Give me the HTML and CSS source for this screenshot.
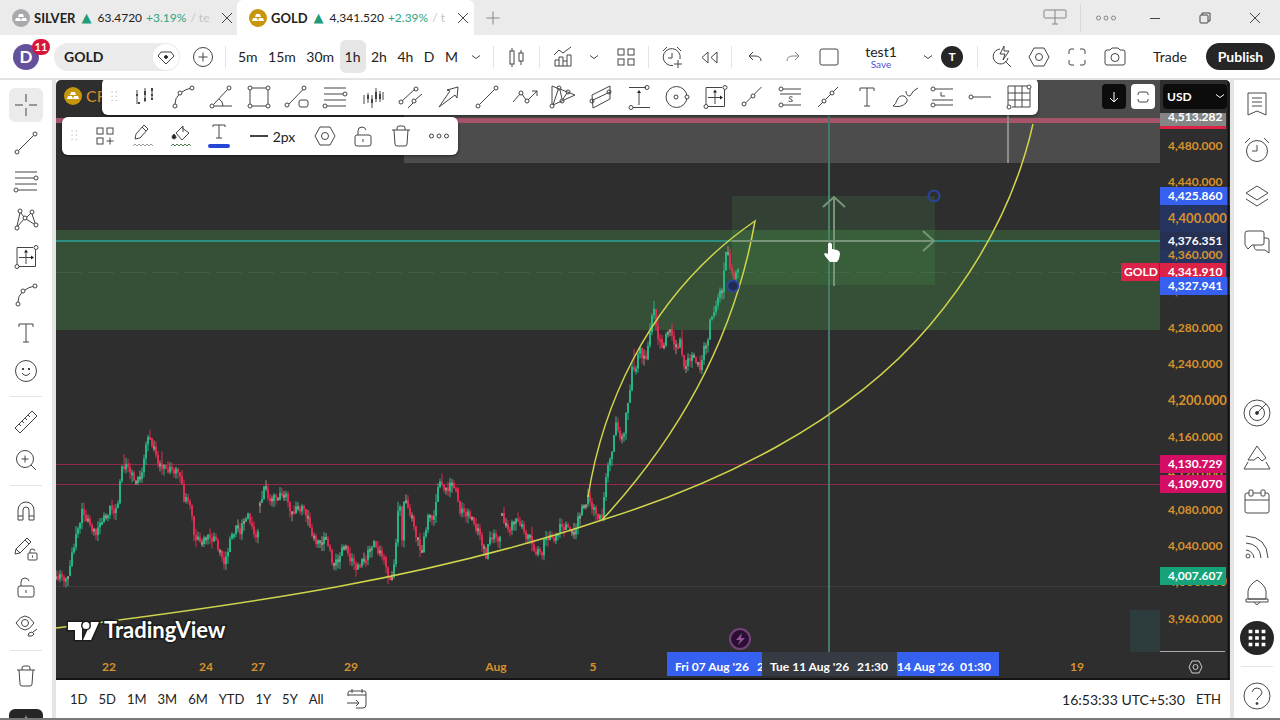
FILE: index.html
```html
<!DOCTYPE html>
<html lang="en">
<head>
  <meta charset="UTF-8" />
  <meta name="viewport" content="width=device-width, initial-scale=1.0"/>
  <title>GOLD 4,341.520 +2.39%</title>
  <link rel="stylesheet" href="styles.css">
</head>
<body>
  <svg class="defs" aria-hidden="true">
    <symbol id="chevron" viewBox="0 0 28 28"><path d="M10 12.500l4 3 4-3"/></symbol>
    <symbol id="trend" viewBox="0 0 28 28"><path d="M6.500 21.500l15-15"/><circle cx="5" cy="23" r="2"/><circle cx="23" cy="5" r="2"/></symbol>
    <symbol id="fib" viewBox="0 0 28 28"><path d="M3 5h22M3 11h19M3 17h22M6 23h19"/><circle cx="24" cy="11" r="2"/><circle cx="4" cy="23" r="2"/></symbol>
    <symbol id="curve" viewBox="0 0 28 28"><path d="M6 21q0-6 4-9.500M13 9q4-3 8-3.500"/><circle cx="6" cy="23" r="2"/><circle cx="11" cy="10" r="2"/><circle cx="23" cy="5" r="2"/></symbol>
    <symbol id="range" viewBox="0 0 28 28"><path d="M5 21V4.500h16M23.500 7v16.500H7M14 21V8M7 14.500h13"/><path class="arrowhead" d="M12 9.500l2-3 2 3zM19 12.500l3 2-3 2z"/><circle cx="24" cy="4.500" r="2"/><circle cx="5" cy="23.500" r="2"/></symbol>
    <symbol id="text" viewBox="0 0 28 28"><path d="M7 8V5h14v3M14 5v18M11 23h6"/></symbol>
    <symbol id="hex" viewBox="0 0 28 28"><path d="M9 5h10l5 9-5 9H9l-5-9z"/><circle cx="14" cy="14" r="3.500"/></symbol>
    <symbol id="unlock" viewBox="0 0 28 28"><rect x="6" y="13" width="16" height="11" rx="2"/><path d="M9 13V9q0-4 4-4 3 0 4 3M14 17v3"/></symbol>
    <symbol id="trash" viewBox="0 0 28 28"><path d="M5 8h18M10 8V6q0-2 2-2h4q2 0 2 2v2M7 8l1 14q0 2 2 2h8q2 0 2-2l1-14"/></symbol>
    <symbol id="dots" viewBox="0 0 28 28"><circle cx="6.500" cy="14" r="2"/><circle cx="14" cy="14" r="2"/><circle cx="21.500" cy="14" r="2"/></symbol>
    <symbol id="grip" viewBox="0 0 28 28"><path class="grip-dots" d="M11 8h1.500M16 8h1.500M11 13h1.500M16 13h1.500M11 18h1.500M16 18h1.500"/></symbol>
    <symbol id="close" viewBox="0 0 28 28"><path d="M9 9l10 10M19 9L9 19"/></symbol>
    <symbol id="bars" viewBox="0 0 28 28"><path d="M6 7v14M14 5v14M21 5v12"/><path class="thick" d="M5 12h2M7 20h2M14 8v4M14 15v3M21 5v3M21 11v2M21 15v2"/></symbol>
    <symbol id="bullion" viewBox="0 0 18 18"><circle cx="9" cy="9" r="9"/><path class="ingot" d="M7 5h4l1 3H6zM4 9h4l1 3H3zM10 9h4l1 3H9z"/></symbol>
  </svg>

  <div class="app">
    <header class="tabs">
      <div class="tab">
        <svg class="coin silver"><use href="#bullion"/></svg>
        <b>SILVER</b><span class="up">▲</span><span>63.4720</span><span class="gain">+3.19%</span><span class="fade">/ te</span>
        <button class="tab-close" aria-label="Close SILVER"><svg class="icon"><use href="#close"/></svg></button>
      </div>
      <div class="tab current">
        <svg class="coin"><use href="#bullion"/></svg>
        <b>GOLD</b><span class="up">▲</span><span>4,341.520</span><span class="gain">+2.39%</span><span class="fade">/ t</span>
        <button class="tab-close" aria-label="Close GOLD"><svg class="icon"><use href="#close"/></svg></button>
      </div>
      <button class="btn" aria-label="New tab"><svg class="icon light" viewBox="0 0 28 28"><path d="M14 7.500v13M7.500 14h13"/></svg></button>
      <div class="window-buttons">
        <button aria-label="Link window"><svg class="icon light" viewBox="0 0 28 28"><rect x="3" y="6" width="22" height="8" rx="1"/><path d="M14 6v14M11 20h6"/></svg></button>
        <button class="ruled" aria-label="Menu"><svg class="icon light"><use href="#dots"/></svg></button>
        <button aria-label="Minimise"><svg class="icon" viewBox="0 0 28 28"><path d="M9 14.500h10"/></svg></button>
        <button aria-label="Restore"><svg class="icon" viewBox="0 0 28 28"><rect x="9" y="11" width="8" height="8" rx="1"/><path d="M11 11V9h8v8h-2"/></svg></button>
        <button aria-label="Close"><svg class="icon"><use href="#close"/></svg></button>
      </div>
    </header>

    <nav class="toolbar">
      <button class="avatar" aria-label="Account">D<span class="badge">11</span></button>
      <button class="symbol">GOLD<span class="gem"><svg class="icon" viewBox="0 0 28 28"><path d="M9 9h10l3 4-8 8-8-8z"/><path class="solid" d="M14 12l2 2-2 2-2-2z"/></svg></span></button>
      <button class="btn" aria-label="Compare"><svg class="icon" viewBox="0 0 28 28"><circle cx="14" cy="14" r="9.500"/><path d="M14 9.500v9M9.500 14h9"/></svg></button>
      <i class="sep"></i>
      <div class="intervals">
        <button>5m</button><button>15m</button><button>30m</button><button class="active">1h</button><button>2h</button><button>4h</button><button>D</button><button>M</button>
      </div>
      <button class="more" aria-label="More intervals"><svg class="icon"><use href="#chevron"/></svg></button>
      <i class="sep"></i>
      <button class="btn" aria-label="Candles"><svg class="icon" viewBox="0 0 28 28"><rect x="7" y="8" width="4" height="13"/><rect x="16" y="10" width="4" height="8"/><path d="M9 5v3M9 21v3M18 7v3M18 18v4"/></svg></button>
      <i class="sep"></i>
      <button class="btn" aria-label="Indicators"><svg class="icon" viewBox="0 0 28 28"><path d="M5 12l5-5 4 3 8-6M6 23v-6h4v-3h4v4h4v-6h4v11zM10 17v6M14 18v5M18 18v5"/></svg></button>
      <button class="more" aria-label="Favourite indicators"><svg class="icon"><use href="#chevron"/></svg></button>
      <button class="btn" aria-label="Templates"><svg class="icon" viewBox="0 0 28 28"><rect x="6" y="6" width="6" height="6"/><rect x="16" y="6" width="6" height="6"/><rect x="6" y="16" width="6" height="6"/><rect x="16" y="16" width="6" height="6"/></svg></button>
      <i class="sep"></i>
      <button class="btn" aria-label="Alert"><svg class="icon" viewBox="0 0 28 28"><path d="M22 16a8.500 8.500 0 1 0-7 6.500M14 10v5h-4M5 8l4-4M19 4l4 4M20 17v8M16 21h8"/></svg></button>
      <button class="btn" aria-label="Replay"><svg class="icon" viewBox="0 0 28 28"><path d="M13 9v11l-6-5.500zM22 9v11l-6-5.500z"/></svg></button>
      <i class="sep"></i>
      <button class="btn" aria-label="Undo"><svg class="icon" viewBox="0 0 28 28"><path d="M12 9l-4 4 4 4M8 13h6q6 0 6 5"/></svg></button>
      <button class="btn" aria-label="Redo"><svg class="icon light" viewBox="0 0 28 28"><path d="M17 9l4 4-4 4M21 13h-6q-6 0-6 5"/></svg></button>
      <button class="btn" aria-label="Layout"><svg class="icon" viewBox="0 0 28 28"><rect x="5" y="6" width="18" height="16" rx="2"/></svg></button>
      <button class="layout-name">test1<small>Save</small></button>
      <button class="more" aria-label="Layouts"><svg class="icon"><use href="#chevron"/></svg></button>
      <span class="initial">T</span>
      <div class="toolbar-right">
        <i class="sep"></i>
        <button class="btn" aria-label="Quick search"><svg class="icon" viewBox="0 0 28 28"><path d="M13 6a7.500 7.500 0 1 0 8 9M18 18l6 6M17 3l-4 8h5l-2 6 6-9h-5z"/></svg></button>
        <button class="btn" aria-label="Settings"><svg class="icon"><use href="#hex"/></svg></button>
        <button class="btn" aria-label="Fullscreen"><svg class="icon" viewBox="0 0 28 28"><path d="M6 11V8q0-2 2-2h3M17 6h3q2 0 2 2v3M22 17v3q0 2-2 2h-3M11 22H8q-2 0-2-2v-3"/></svg></button>
        <button class="btn" aria-label="Snapshot"><svg class="icon" viewBox="0 0 28 28"><path d="M4 9q0-2 2-2h3l2-2h6l2 2h3q2 0 2 2v11q0 2-2 2H6q-2 0-2-2z"/><circle cx="14" cy="14.500" r="4"/></svg></button>
        <button class="trade">Trade</button>
        <button class="publish">Publish</button>
      </div>
    </nav>

    <main class="workspace">
      <aside class="tools">
        <button class="active" aria-label="Cross"><svg class="icon" viewBox="0 0 28 28"><path d="M14 3v8M14 17v8M3 14h8M17 14h8"/></svg></button>
        <button aria-label="Trend line"><svg class="icon"><use href="#trend"/></svg></button>
        <button aria-label="Fib retracement"><svg class="icon"><use href="#fib"/></svg></button>
        <button aria-label="XABCD pattern"><svg class="icon" viewBox="0 0 28 28"><path d="M5 21L8 8M9 8l3 4M15 12l4-4M20 9l3 9M22 19l-8-5M6 21l6-7"/><circle cx="5" cy="23" r="2"/><circle cx="8" cy="6" r="2"/><circle cx="13" cy="13" r="2"/><circle cx="20" cy="7" r="2"/><circle cx="24" cy="20" r="2"/></svg></button>
        <button aria-label="Date and price range"><svg class="icon"><use href="#range"/></svg></button>
        <button aria-label="Curve"><svg class="icon"><use href="#curve"/></svg></button>
        <button aria-label="Text"><svg class="icon"><use href="#text"/></svg></button>
        <button aria-label="Icons"><svg class="icon" viewBox="0 0 28 28"><circle cx="14" cy="14" r="10.500"/><path d="M10 16q4 5 8 0"/><path class="thick" d="M10 12h2M16 12h2"/></svg></button>
        <hr>
        <button aria-label="Measure"><svg class="icon" viewBox="0 0 28 28"><path d="M3 20L20 3l5 5L8 25zM7 16l2 2M10 13l2 2M13 10l2 2M16 7l2 2"/></svg></button>
        <button aria-label="Zoom in"><svg class="icon" viewBox="0 0 28 28"><circle cx="13" cy="13" r="8.500"/><path d="M19 19l5 5M13 9.500v7M9.500 13h7"/></svg></button>
        <hr>
        <button aria-label="Magnet"><svg class="icon" viewBox="0 0 28 28"><path d="M6 23V13a8 8 0 0 1 16 0v10h-5V13a3 3 0 0 0-6 0v10zM6 19h5M17 19h5"/></svg></button>
        <button aria-label="Stay in drawing mode"><svg class="icon" viewBox="0 0 28 28"><path d="M3 19l1-5L15 3l4 4L8 18zM13 5l4 4M4 14l4 4"/><rect x="16" y="18" width="9" height="7" rx="1"/><path d="M18 18v-2q0-2 2-2 3 0 3 2M20.500 20.500v2"/></svg></button>
        <button aria-label="Lock drawings"><svg class="icon"><use href="#unlock"/></svg></button>
        <button aria-label="Hide drawings"><svg class="icon" viewBox="0 0 28 28"><path d="M4 12q9-14 18 0-9 14-18 0z"/><circle cx="13" cy="12" r="3.500"/><path d="M16 25q0-4 4-4l2 2q-1 3-6 2zM21 21l4-3"/></svg></button>
        <hr>
        <button aria-label="Remove drawings"><svg class="icon"><use href="#trash"/></svg></button>
        <button class="drawer" aria-label="Favourites"><svg class="icon" viewBox="0 0 28 28"><path class="star" d="M14 1l2 5h5l-4 4 2 6-5-3-5 3 2-6-4-4h5z"/></svg></button>
      </aside>

      <section class="center">
        <div class="chart">
          <svg id="chart" class="plot" viewBox="56 80 1174 600" preserveAspectRatio="xMaxYMid slice">
            <rect class="zone-grey" x="404" y="80" width="756" height="83"/>
            <path class="resistance" d="M56 120.500H1160"/>
            <path class="marker" d="M1008 115V163"/>
            <rect class="zone-green" x="56" y="230" width="1104" height="100"/>
            <rect class="zone-teal" x="1130" y="610" width="30" height="42"/>
            <path class="last" d="M56 272.500H1160"/>
            <path class="faint" d="M56 586.500H1160"/>
            <path class="support" d="M56 464.500H1160M56 484.500H1160"/>
            <g id="candles"></g>
            <path class="cross" d="M56 241H1160"/>
            <path class="cross dim" d="M829 115V652"/>
            <rect class="zone-box" x="732" y="196" width="203" height="89"/>
            <path class="curve" d="M56 628C250 604 430 578 602 520C712 486 846 425 930 325C985 260 1018 190 1033 124"/>
            <path class="curve" d="M588 497C600 420 640 300 755 221C734 340 676 440 602 520"/>
            <path class="box-arrow" d="M732 241H934M923 231l11 10-11 10M834 286V197M823 207l11-10 11 10"/>
            <circle class="handle" cx="934" cy="196" r="5.500"/>
            <circle class="handle filled" cx="733" cy="286" r="5.500"/>
            <path class="hand" d="M828 244q2-3 4 0v5l5 1q3 1 3 4l-1 5-2 3h-7l-5-6q-2-3 1-3l2 1z"/>
            <circle class="event" cx="740" cy="639" r="10"/>
            <path class="bolt" d="M742 633l-6 7h4l-2 5 7-7h-4z"/>
            <g class="brand">
              <path d="M68 622h14v18h-7V630h-7zM91 622h8l-8 18h-8z"/><circle cx="86" cy="625.500" r="3.500"/>
              <text x="104" y="638">TradingView</text>
            </g>
            <rect class="axis-bg" x="1160" y="80" width="70" height="600"/>
            <rect class="axis-bg" x="56" y="652" width="1104" height="28"/>
            <rect class="axis-range" x="1160" y="196" width="67" height="90"/>
            <g id="prices"></g>
            <g id="tags"></g>
            <path class="axis-line" d="M1160 651.500H1225"/>
            <path class="axis-gear" d="M1192 661h7l3 6-3 6h-7l-3-6z"/><circle class="axis-gear" cx="1195.500" cy="667" r="2.500"/>
            <g class="times">
              <text x="109" y="671">22</text><text x="206" y="671">24</text><text x="258" y="671">27</text><text x="351" y="671">29</text>
              <text x="496" y="671">Aug</text><text x="593" y="671">5</text><text x="1077" y="671">19</text>
            </g>
            <rect class="blue" x="667" y="652" width="95" height="24"/>
            <rect class="slate" x="762" y="652" width="135" height="24"/>
            <rect class="blue" x="897" y="652" width="102" height="24"/>
            <g class="stamps">
              <text x="675" y="671">Fri 07 Aug '26</text><text x="757" y="671" class="clipped">2</text>
              <text x="770" y="671">Tue 11 Aug '26</text><text x="857" y="671">21:30</text>
              <text x="897" y="671">14 Aug '26</text><text x="960" y="671">01:30</text>
            </g>
            <path class="chart-edge" d="M56 679H1230M1228.500 80V680"/>
          </svg>

          <div class="legend"><svg class="coin"><use href="#bullion"/></svg>CFD</div>

          <div class="pane-buttons">
            <button class="dark" aria-label="Scroll"><svg class="icon" viewBox="0 0 28 28"><path d="M14 9v10M10 15l4 4 4-4"/></svg></button>
            <button aria-label="Maximise"><svg class="icon" viewBox="0 0 28 28"><path d="M9 12v-1q0-2 2-2h6q2 0 2 2v1M9 16v1q0 2 2 2h6q2 0 2-2v-1"/></svg></button>
            <label class="currency"><select aria-label="Currency"><option>USD</option></select><svg class="icon"><use href="#chevron"/></svg></label>
          </div>

          <div class="float draw-bar">
            <svg class="icon grip"><use href="#grip"/></svg>
            <button aria-label="Bars pattern"><svg class="icon"><use href="#bars"/></svg></button>
            <button aria-label="Curve"><svg class="icon"><use href="#curve"/></svg></button>
            <button aria-label="Trend angle"><svg class="icon" viewBox="0 0 28 28"><path d="M7 23h18M6.500 21.500l14-15M12 16q4 2 4 7"/><circle cx="5" cy="23" r="2"/><circle cx="22" cy="5" r="2"/></svg></button>
            <button aria-label="Rectangle"><svg class="icon" viewBox="0 0 28 28"><path d="M7 5h14M7 23h14M5 7v14M23 7v14"/><circle cx="5" cy="5" r="2"/><circle cx="23" cy="5" r="2"/><circle cx="5" cy="23" r="2"/><circle cx="23" cy="23" r="2"/></svg></button>
            <button aria-label="Info line"><svg class="icon" viewBox="0 0 28 28"><path d="M6 21L20 6.500"/><circle cx="4" cy="22" r="2"/><circle cx="21" cy="5" r="2"/><rect x="16" y="17" width="9" height="7" rx="2"/></svg></button>
            <button aria-label="Fib retracement"><svg class="icon"><use href="#fib"/></svg></button>
            <button aria-label="Ghost feed"><svg class="icon" viewBox="0 0 28 28"><path d="M5 12v9M9 10v10M13 12v13M17 5v14M21 8v11M24 9v8"/><path class="thick" d="M9 12v4M13 16v4M17 9v7M21 11v5"/></svg></button>
            <button aria-label="Parallel channel"><svg class="icon" viewBox="0 0 28 28"><path d="M5 18L18 6M11 25l5-5M18 17l7-6"/><circle cx="4" cy="19" r="2"/><circle cx="19" cy="6" r="2"/><circle cx="17" cy="18" r="2"/></svg></button>
            <button aria-label="Arrow"><svg class="icon" viewBox="0 0 28 28"><path d="M4 24L15 8l-3-1L23 4l-1 11-2-3z"/></svg></button>
            <button aria-label="Trend line"><svg class="icon"><use href="#trend"/></svg></button>
            <button aria-label="Polyline"><svg class="icon" viewBox="0 0 28 28"><path d="M2 19l7-8M11 11l4 6M17 17l9-9M21 8h5v5"/><circle cx="10" cy="10" r="2"/><circle cx="16" cy="18" r="2"/></svg></button>
            <button aria-label="Triangle pattern"><svg class="icon" viewBox="0 0 28 28"><path d="M3 21V3l23 9-22 10L9 7M11 7l2 9M14 16l4-6"/><circle cx="3" cy="23" r="2"/><circle cx="10" cy="5" r="2"/><circle cx="13" cy="18" r="2"/><circle cx="19" cy="9" r="2"/></svg></button>
            <button aria-label="Regression"><svg class="icon" viewBox="0 0 28 28"><path d="M5 12l18-9v13L6 25zM6 17l17-8"/><circle cx="5" cy="18" r="2"/><circle cx="22" cy="9" r="2"/></svg></button>
            <button aria-label="Price range"><svg class="icon" viewBox="0 0 28 28"><path d="M4 4.500h17M8 24.500h17M14 22V8"/><path class="arrowhead" d="M12 10l2-3 2 3z"/><circle cx="22" cy="4.500" r="2"/><circle cx="6" cy="24.500" r="2"/></svg></button>
            <button aria-label="Circle"><svg class="icon" viewBox="0 0 28 28"><circle cx="13.500" cy="14" r="10.500"/><circle cx="13" cy="14" r="2"/><circle class="knob" cx="24" cy="14" r="2"/></svg></button>
            <button aria-label="Date and price range"><svg class="icon"><use href="#range"/></svg></button>
            <button aria-label="Ray"><svg class="icon" viewBox="0 0 28 28"><path d="M6.500 20l6-6M15.500 11l7-7"/><circle cx="5" cy="21" r="2"/><circle cx="14" cy="13" r="2"/></svg></button>
            <button aria-label="Short position"><svg class="icon" viewBox="0 0 28 28"><path d="M6 6h18M3 11h21M6 22h18"/><circle cx="4" cy="6" r="2"/><circle cx="4" cy="22" r="2"/><path d="M15.500 14q-4-1-3 1.500 3 1 3 2.500-2 1-4 0"/></svg></button>
            <button aria-label="Extended line"><svg class="icon" viewBox="0 0 28 28"><path d="M3 24l5-5M11 16l5-5M18 9l5-5"/><circle cx="9" cy="18" r="2"/><circle cx="17" cy="10" r="2"/></svg></button>
            <button aria-label="Text"><svg class="icon"><use href="#text"/></svg></button>
            <button aria-label="Brush"><svg class="icon" viewBox="0 0 28 28"><path d="M2 23q3-2 4-6 2-5 7-4 5 3 2 7-5 5-13 3zM15 8q0 5 4 5 3-6 8-8"/></svg></button>
            <button aria-label="Long position"><svg class="icon" viewBox="0 0 28 28"><path d="M6 6h18M3 17h21M6 22h18M12 9v4h4"/><circle cx="4" cy="6" r="2"/><circle cx="4" cy="22" r="2"/></svg></button>
            <button aria-label="Horizontal ray"><svg class="icon" viewBox="0 0 28 28"><path d="M6 14h18"/><circle cx="4" cy="14" r="2"/></svg></button>
            <button aria-label="Gann box"><svg class="icon" viewBox="0 0 28 28"><path d="M3 3h19M3 10h22M3 17h22M7 24h18M3 3v19M10 3v21M17 3v21M25 6v18"/><circle cx="24" cy="4" r="2"/><circle cx="4" cy="24" r="2"/></svg></button>
          </div>

          <div class="float style-bar">
            <svg class="icon grip"><use href="#grip"/></svg>
            <button aria-label="Templates"><svg class="icon" viewBox="0 0 28 28"><rect x="6" y="6" width="6" height="6"/><rect x="16" y="6" width="6" height="6"/><rect x="6" y="16" width="6" height="6"/><path d="M19 15.500v7M15.500 19h7"/></svg></button>
            <button aria-label="Line colour"><svg class="icon" viewBox="0 0 28 28"><path d="M6 17l1-5 8-9 4 4-8 9zM13 5l4 4"/><path class="wave" d="M4 24l2-2 2 2 2-2 2 2 2-2 2 2 2-2 2 2 2-2 2 2"/></svg></button>
            <button aria-label="Fill colour"><svg class="icon" viewBox="0 0 28 28"><path d="M14 5l8 6-7 7-6-7 7-7v6"/><path class="solid" d="M7 12q4 4 0 5-4-1 0-5z"/><path class="wave green" d="M4 24l2-2 2 2 2-2 2 2 2-2 2 2 2-2 2 2 2-2 2 2"/></svg></button>
            <button aria-label="Text colour"><svg class="icon" viewBox="0 0 28 28"><path d="M8 5V3h12v2M14 3v13M11 16h6"/><path class="ink" d="M5 24h18"/></svg></button>
            <button class="stroke-width"><svg class="icon" viewBox="0 0 28 28"><path class="heavy" d="M5 14h18"/></svg>2px</button>
            <button aria-label="Settings"><svg class="icon"><use href="#hex"/></svg></button>
            <button aria-label="Lock"><svg class="icon"><use href="#unlock"/></svg></button>
            <button aria-label="Remove"><svg class="icon"><use href="#trash"/></svg></button>
            <button aria-label="More"><svg class="icon"><use href="#dots"/></svg></button>
          </div>
        </div>

        <footer class="bottom">
          <button>1D</button><button>5D</button><button>1M</button><button>3M</button><button>6M</button><button>YTD</button><button>1Y</button><button>5Y</button><button>All</button>
          <button class="goto" aria-label="Go to date"><svg class="icon" viewBox="0 0 28 28"><path d="M5 11V8q0-2 2-2h14q2 0 2 2v12q0 3-3 3h-7M5 10h18M9 4v4M19 4v4M4 18h12M13 15l3 3-3 3"/></svg></button>
          <button class="clock">16:53:33 UTC+5:30</button><button>ETH</button>
        </footer>
      </section>

      <aside class="widgets">
        <button aria-label="Watchlist"><svg class="icon" viewBox="0 0 28 28"><path d="M5 3h18v22l-9-4-9 4zM9 8h10M9 12h10M9 16h10"/></svg></button>
        <button aria-label="Alerts"><svg class="icon" viewBox="0 0 28 28"><circle cx="14" cy="15" r="10.500"/><path d="M14 9v6H9M2 7l5-5M21 2l5 5"/></svg></button>
        <button aria-label="Object tree"><svg class="icon" viewBox="0 0 28 28"><path d="M14 4l11 7-11 7-11-7zM3 17l11 7 11-7"/></svg></button>
        <button aria-label="Chats"><svg class="icon" viewBox="0 0 28 28"><path d="M5 3h14q2 0 2 2v10q0 2-2 2H9l-4 4-3-4V5q0-2 3-2zM21 10h3q2 0 2 2v13l-4-3h-8q-3 0-3-5"/></svg></button>
        <div class="widgets-lower">
          <button aria-label="Screener"><svg class="icon" viewBox="0 0 28 28"><circle cx="14" cy="14" r="13"/><circle cx="14" cy="14" r="7.500"/><path d="M14 14l9-9"/><circle class="solid" cx="14" cy="14" r="1.500"/></svg></button>
          <button aria-label="Pine"><svg class="icon" viewBox="0 0 28 28"><path d="M14 2l9 12-4 3-4-4-4 3H5zM5 18l-4 7h26l-4-7"/></svg></button>
          <button aria-label="Calendar"><svg class="icon" viewBox="0 0 28 28"><rect x="2" y="4" width="24" height="20" rx="2"/><path d="M2 11h24"/><rect class="peg" x="6" y="1" width="4" height="6" rx="1"/><rect class="peg" x="18" y="1" width="4" height="6" rx="1"/></svg></button>
          <button aria-label="News"><svg class="icon" viewBox="0 0 28 28"><path d="M3 2q21 1 22 22M3 9q14 1 15 15M3 16q7 1 8 8"/><circle cx="5" cy="22" r="2"/></svg></button>
          <button aria-label="Notifications"><svg class="icon" viewBox="0 0 28 28"><path d="M5 20v-8q1-6 9-11 8 5 9 11v8zM3 20h22v3H3zM11 23q3 5 6 0"/></svg></button>
          <button aria-label="Apps"><span class="apps"><svg class="icon" viewBox="0 0 28 28"><path d="M5 5h4v4H5zM12 5h4v4h-4zM19 5h4v4h-4zM5 12h4v4H5zM12 12h4v4h-4zM19 12h4v4h-4zM5 19h4v4H5zM12 19h4v4h-4zM19 19h4v4h-4z"/></svg></span></button>
          <hr>
          <button aria-label="Help"><svg class="icon" viewBox="0 0 28 28"><circle cx="14" cy="14" r="13"/><path d="M9 10q1-4 5-4t5 4q0 2-2 4-3 2-3 4"/><circle class="solid" cx="14" cy="21.500" r="1"/></svg></button>
        </div>
      </aside>
    </main>
  </div>
  <script src="chart.js"></script>
</body>
</html>
```
FILE: styles.css
```css
* {
  box-sizing: border-box;
}
body {
  margin: 0;
  font-family: Lato, "Open Sans", sans-serif;
  font-size: 14px;
  color: #222;
}
button {
  display: flex;
  align-items: center;
  justify-content: center;
  flex: none;
  padding: 0;
  border: 0;
  background: none;
  color: inherit;
  font: inherit;
}
hr {
  width: 32px;
  height: 1px;
  margin: 6px auto;
  border: 0;
  background: #e4e4e4;
}
.defs {
  position: absolute;
  width: 0;
  height: 0;
}
.app {
  display: flex;
  flex-direction: column;
  height: 100vh;
  overflow: hidden;
  border-bottom: 2px solid #77787a;
}

/* icons */
.icon {
  width: 28px;
  height: 28px;
  flex: none;
  fill: none;
  stroke: #444;
}
.icon.light {
  stroke: #858585;
}
.solid {
  fill: #222;
}
.arrowhead {
  fill: #222;
  stroke: none;
}
.knob {
  fill: #fff;
}
.thick {
  stroke-width: 2;
}
.heavy {
  stroke-width: 2;
}
.grip-dots {
  stroke: #aaa;
}
.wave {
  stroke: #9a9a9a;
}
.wave.green {
  stroke: #4c7a4c;
}
.ink {
  stroke: #2447d5;
  stroke-width: 4;
  stroke-linecap: round;
}
.coin {
  width: 18px;
  height: 18px;
  flex: none;
  fill: #c8960c;
}
.coin.silver {
  fill: #a9a9ad;
}
.ingot {
  fill: #fff;
}

/* window tabs */
.tabs {
  display: flex;
  flex: none;
  height: 35px;
  background: #ebebeb;
  font-size: 13px;
}
.tab {
  display: flex;
  align-items: center;
  gap: 4px;
  width: 237px;
  padding-left: 12px;
  white-space: nowrap;
}
.tab.current {
  background: #fff;
  border-radius: 6px 6px 0 0;
}
.tab span {
  font-size: 12px;
}
.tab b {
  font-weight: 700;
}
.tab .up {
  padding: 0 2px;
  color: #1f9c7c;
  font-family: "DejaVu Sans", sans-serif;
  font-size: 13px;
}
.gain {
  color: #2fa583;
}
.fade {
  flex: 1;
  color: #c4c4c4;
}
.tab-close {
  width: 28px;
}
.window-buttons {
  display: flex;
  align-items: center;
  margin-left: auto;
}
.window-buttons button {
  width: 50px;
}
.window-buttons .ruled {
  border-left: 1px solid #d8d8d8;
}

/* main toolbar */
.toolbar {
  display: flex;
  align-items: center;
  flex: none;
  height: 45px;
  padding: 0 5px 0 13px;
  border-bottom: 2px solid #e4e4e4;
  background: #fff;
}
.btn {
  width: 37px;
  height: 35px;
}
.more {
  width: 26px;
}
.sep {
  flex: none;
  width: 1px;
  height: 22px;
  margin: 0 4px;
  background: #e4e4e4;
}
.avatar {
  position: relative;
  width: 26px;
  height: 26px;
  border-radius: 50%;
  background: #65509c;
  color: #fff;
  font-size: 17px;
  font-weight: 700;
}
.badge {
  position: absolute;
  top: -5px;
  left: 19px;
  width: 18px;
  height: 16px;
  border-radius: 8px;
  background: #d6143c;
  font-size: 11px;
  line-height: 16px;
}
.symbol {
  justify-content: space-between;
  width: 126px;
  height: 28px;
  margin: 0 4px 0 15px;
  padding: 0 1px 0 10px;
  border-radius: 14px;
  background: #ebebeb;
  font-weight: 700;
}
.gem {
  display: flex;
  align-items: center;
  justify-content: center;
  width: 26px;
  height: 26px;
  border-radius: 50%;
  background: #fff;
}
.intervals {
  display: flex;
  justify-content: space-between;
  width: 230px;
  margin-left: 3px;
}
.intervals button {
  height: 33px;
  padding: 0 5px;
  border-radius: 6px;
}
.intervals .active {
  background: #e6e6e6;
}
.layout-name {
  flex-direction: column;
  width: 68px;
  line-height: 15px;
}
.layout-name small {
  color: #4a55d8;
  font-size: 10px;
  line-height: 11px;
}
.initial {
  width: 22px;
  height: 22px;
  border-radius: 50%;
  background: #262626;
  color: #fff;
  font-size: 12px;
  font-weight: 700;
  line-height: 22px;
  text-align: center;
}
.toolbar-right {
  display: flex;
  align-items: center;
  margin-left: auto;
}
.toolbar-right .btn {
  width: 38px;
}
.trade {
  width: 72px;
}
.publish {
  width: 69px;
  height: 27px;
  border-radius: 14px;
  background: #262626;
  color: #fff;
  font-weight: 700;
}

/* workspace */
.workspace {
  display: grid;
  grid-template-columns: 52px minmax(0, 1fr) 46px;
  gap: 4px;
  flex: 1;
  min-height: 0;
  background: #e4e4e4;
}
.tools,
.widgets {
  display: flex;
  flex-direction: column;
  overflow: hidden;
  background: #fff;
}
.tools {
  align-items: center;
  padding-top: 6px;
}
.tools hr,
.widgets hr {
  flex: none;
}
.tools button {
  width: 34px;
  height: 38px;
}
.tools .active {
  height: 34px;
  margin: 2px 0;
  border-radius: 6px;
  background: #ebebeb;
}
.tools .drawer {
  margin-top: 14px;
  border-radius: 6px;
  background: #262626;
}
.star {
  fill: #fff;
}
.widgets {
  padding-top: 1px;
}
.widgets button {
  height: 46px;
}
.widgets .icon {
  stroke: #4a4a4a;
}
.widgets-lower {
  display: flex;
  flex-direction: column;
  margin-top: auto;
}
.widgets-lower button {
  height: 45px;
}
.widgets .peg {
  fill: #fff;
}
.apps {
  display: flex;
  align-items: center;
  justify-content: center;
  width: 34px;
  height: 34px;
  border-radius: 50%;
  background: #262626;
}
.widgets .apps .icon {
  width: 26px;
  height: 26px;
  fill: #fff;
  stroke: none;
}
.center {
  display: flex;
  flex-direction: column;
  min-width: 0;
  background: #fff;
}
.chart {
  position: relative;
  flex: 1;
  min-height: 0;
  overflow: hidden;
  border-radius: 5px 5px 0 0;
  background: #2e2e2e;
}
.plot {
  display: block;
  width: 100%;
  height: 100%;
}
.bottom {
  display: flex;
  align-items: center;
  gap: 11px;
  height: 38px;
  padding: 0 9px 0 14px;
  font-size: 13px;
}
.goto {
  margin-left: 8px;
}
.clock {
  margin-left: auto;
  font-size: 14px;
}

/* overlays on the chart */
.legend {
  position: absolute;
  top: 7px;
  left: 8px;
  display: flex;
  align-items: center;
  gap: 4px;
  color: #d8912c;
  font-size: 16px;
  line-height: 18px;
}
.float {
  position: absolute;
  display: flex;
  align-items: center;
  border-radius: 6px;
  background: #fff;
  box-shadow: 0 1px 3px rgba(0,0,0,0.5);
}
.float button {
  width: 38px;
}
.float .grip {
  width: 24px;
}
.draw-bar {
  top: -2px;
  left: 46px;
  height: 37px;
}
.style-bar {
  top: 37px;
  left: 6px;
  height: 38px;
}
.float .stroke-width {
  width: 68px;
  padding-right: 4px;
}
.pane-buttons {
  position: absolute;
  top: 4px;
  right: 3px;
  display: flex;
  gap: 5px;
}
.pane-buttons button {
  width: 24px;
  height: 25px;
  border-radius: 4px;
  background: #fff;
}
.pane-buttons .dark {
  background: #0c0c0c;
}
.dark .icon,
.currency .icon {
  stroke: #fff;
}
.currency {
  position: relative;
  margin-left: 3px;
}
.currency select {
  width: 64px;
  height: 25px;
  padding: 0 4px;
  border: 0;
  border-radius: 4px;
  appearance: none;
  background: #0c0c0c;
  color: #fff;
  font: 700 12px Lato, sans-serif;
}
.currency .icon {
  position: absolute;
  top: -2px;
  right: -7px;
  pointer-events: none;
}

/* chart drawing */
.zone-grey {
  fill: #4c4c4c;
}
.zone-green {
  fill: #365037;
}
.zone-teal {
  fill: #2d3d3d;
}
.zone-box {
  fill: rgba(76,175,80,0.15);
}
.resistance {
  stroke: #a65468;
  stroke-width: 5;
}
.marker {
  stroke: #8b8b8b;
  stroke-width: 2;
}
.last {
  stroke: #465a44;
  stroke-dasharray: 26 6;
}
.faint {
  stroke: #3a3d3a;
}
.support {
  stroke: #8f2a4c;
}
.cross {
  stroke: #2e8f80;
  stroke-width: 2;
}
.cross.dim {
  stroke: #44796f;
}
.curve {
  fill: none;
  stroke: #cfd44c;
  stroke-width: 1.5;
}
.box-arrow {
  fill: none;
  stroke: #78957a;
  stroke-width: 2;
}
.handle {
  fill: none;
  stroke: #2b459e;
  stroke-width: 2;
}
.handle.filled {
  fill: #222b50;
}
.hand {
  fill: #fff;
}
.event {
  fill: #2b0f33;
  stroke: #74437a;
  stroke-width: 2;
}
.bolt {
  fill: #8f5298;
}
.brand {
  fill: #fff;
  stroke: #1c1c1c;
  stroke-width: 3;
  paint-order: stroke;
  font-size: 22px;
  font-weight: 700;
}
.candle-up {
  fill: #25b483;
}
.candle-down {
  fill: #e02a50;
}
.candle-mixed {
  fill: #9b8d80;
}
.axis-bg {
  fill: #2e2e2e;
}
.axis-range {
  fill: #26355f;
}
.axis-line {
  stroke: #aaa;
}
.axis-gear {
  fill: none;
  stroke: #ccc;
}
.price,
.times {
  fill: #d8912c;
  font-size: 12px;
  font-weight: 700;
}
.price.major {
  font-size: 13px;
}
.times {
  text-anchor: middle;
}
.stamps,
.tag-text {
  fill: #fff;
  font-size: 12px;
  font-weight: 700;
}
.blue {
  fill: #3560f0;
}
.slate {
  fill: #363a42;
}
.navy {
  fill: #273052;
}
.red {
  fill: #dc2347;
}
.pink {
  fill: #d40e64;
}
.teal {
  fill: #17a379;
}
.grey {
  fill: #858585;
}
.clipped {
  clip-path: inset(0 2px 0 0);
}
.chart-edge {
  fill: none;
  stroke: #151515;
  stroke-width: 2;
}
```
FILE: chart.js
```js
// swing points of the hourly series, one list per session block
const swings = [
  [[56,577],[63,577],[67,582],[70,562],[76,538],[82,512],[90,524],[97,535],[101,520],[105,518],[110,508],[117,510],[120,485],[122,467],[129,467],[134,480],[143,476],[145,443],[150,438],[160,465],[165,470],[172,470],[180,472],[184,500],[190,503],[194,535],[200,541],[206,538],[216,540],[220,553],[225,562],[232,535],[237,527],[240,531],[247,512],[250,521],[253,535],[258,535]],
  [[260,503],[265,485],[270,500],[277,498],[285,493],[292,513],[298,509],[305,509],[310,527],[317,545],[327,538],[332,562],[340,560],[343,542],[350,558],[357,567],[365,560],[373,542],[382,555],[390,581],[392,577],[397,537],[399,483],[402,542],[404,500],[410,513],[415,530],[421,553],[425,533],[429,515],[435,520],[437,484],[443,484],[447,491],[452,484],[455,487],[460,510],[468,513],[473,523],[480,535],[486,558],[488,540],[493,537],[500,540]],
  [[502,513],[507,530],[513,522],[520,523],[527,538],[531,534],[534,553],[542,553],[545,537],[555,537],[560,528],[570,527],[573,538],[577,520],[582,510],[588,498],[591,504],[597,515],[602,517],[605,493],[607,463],[611,462],[615,422],[618,430],[623,440],[626,417],[629,397],[632,370],[635,370],[640,347],[643,357],[647,358],[650,333],[652,313],[654,312],[657,333],[662,347],[668,330],[673,338],[677,353],[680,336],[683,368],[687,360],[695,358],[700,370],[703,350],[707,343],[711,314],[715,317],[717,296],[722,292],[725,255],[728,253],[732,275],[735,279],[738,270]]
];
const wicks = { 76: 8, 82: 6, 124: 12, 150: 7, 162: 12, 168: 8, 262: 8, 398: 9, 436: 8, 442: 8, 532: 9, 574: 9, 634: 18, 650: 9, 654: 8, 682: 9, 724: 8 };

function rect(x, y, w, h, cls) {
  return `<rect class="${cls}" x="${x}" y="${y.toFixed(1)}" width="${w}" height="${h.toFixed(1)}"/>`;
}

function levelAt(points, x) {
  for (let i = 1; i < points.length; i++) {
    const [x0, y0] = points[i - 1];
    const [x1, y1] = points[i];
    if (x <= x1) return y0 + (y1 - y0) * (x - x0) / (x1 - x0);
  }
  return points[points.length - 1][1];
}

let out = "";
let n = 0;
swings.forEach(points => {
  const end = points[points.length - 1][0];
  let open = points[0][1];
  for (let x = points[0][0]; x <= end; x += 2) {
    n++;
    const noise = ((n * 37) % 11 - 5) * 0.8;
    const close = levelAt(points, x) + noise;
    const top = Math.min(open, close);
    const size = Math.max(Math.abs(close - open), 3);
    const flat = Math.abs(close - open) < 3;
    const cls = flat && n % 3 ? "candle-mixed" : close < open ? "candle-up" : "candle-down";
    const up = wicks[x] || (n * 13) % 7;
    const down = (n * 17) % 8;
    out += rect(x - 0.5, top - up, 1, size + up + down, cls);
    out += rect(x - 1, top, 2, size, cls);
    open = close;
  }
});
document.getElementById("candles").innerHTML = out;

const priceY = p => 146 + (4480 - p) * 0.909;
let labels = "";
for (let p = 4480; p >= 3960; p -= 40) {
  const major = p === 4400 || p === 4200 || p === 4000;
  const text = p.toLocaleString("en-US") + ".000";
  labels += `<text class="price${major ? " major" : ""}" x="1168" y="${Math.round(priceY(p)) + 4}">${text}</text>`;
}
document.getElementById("prices").innerHTML = labels;

const tags = [
  ["4,513.282", 117, "grey"],
  ["4,425.860", 196, "blue"],
  ["4,376.351", 241, "navy"],
  ["4,341.910", 272, "red"],
  ["4,327.941", 286, "blue"],
  ["4,130.729", 464, "pink"],
  ["4,109.070", 484, "pink"],
  ["4,007.607", 576, "teal"]
];
document.getElementById("tags").innerHTML =
  rect(1160, 124, 66, 5, "red") +
  tags.map(([text, y, cls]) => rect(1160, y - 9, 66, 18, cls) +
    `<text class="tag-text" x="1168" y="${y + 4}">${text}</text>`).join("") +
  rect(1226, 187, 4, 18, "blue") + rect(1226, 277, 4, 18, "blue") +
  rect(1160, 80, 66, 33, "axis-bg") +
  rect(1121, 263, 38, 18, "red") + `<text class="tag-text" x="1124" y="276">GOLD</text>`;
```
